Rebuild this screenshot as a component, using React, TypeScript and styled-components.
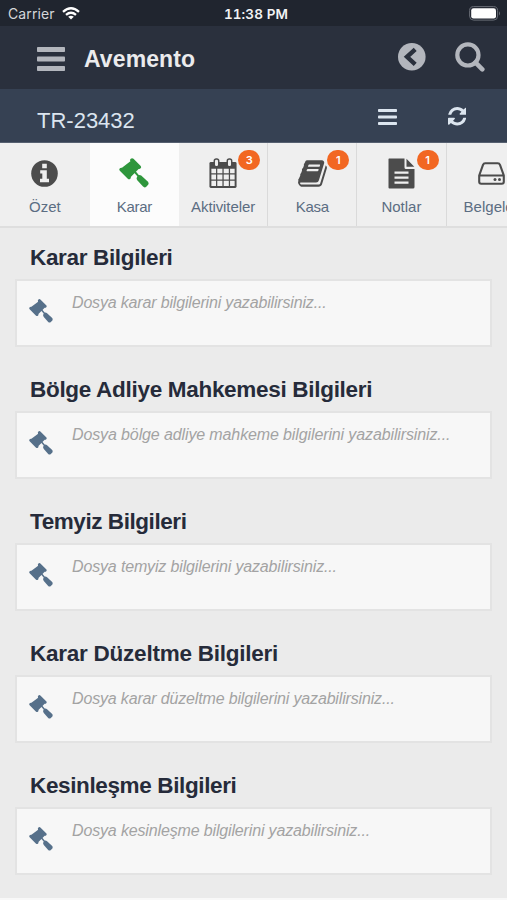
import React from "react";
import styled, { createGlobalStyle } from "styled-components";

const GlobalStyle = createGlobalStyle`
  * { box-sizing: border-box; }
  body { margin: 0; background: #ebebeb; font-family: "Liberation Sans", Arial, sans-serif; }
  svg { display: block; flex: none; }
`;

const Screen = styled.div`
  width: 507px;
  height: 900px;
  overflow: hidden;
  background: #ebebeb;
  border-bottom: 2px solid #f8f8f8;
`;

const StatusBar = styled.div`
  height: 26px;
  padding: 1px 6px 0 8px;
  display: grid;
  grid-template-columns: 1fr auto 1fr;
  align-items: center;
  background: #20252f;
  color: #f2f3f4;
  font-family: Inter, sans-serif;
  font-size: 14px;
`;

const Carrier = styled.div`
  display: flex;
  align-items: center;
  gap: 7px;
  color: #d5d7da;
  letter-spacing: 0.1px;
`;

const Clock = styled.div`
  font-weight: 600;
  font-size: 13.5px;
  font-variant-numeric: tabular-nums;
  letter-spacing: 0.1px;
  margin-left: 3px;
  white-space: nowrap;
`;

const BatterySlot = styled.div`
  display: flex;
  justify-content: flex-end;
`;

const Header = styled.header`
  height: 63px;
  padding: 3px 22px 0 37px;
  display: flex;
  align-items: center;
  background: #2a303d;
  color: #b3b6bd;
`;

const Brand = styled.h1`
  flex: 1;
  margin: 0 0 0 19px;
  color: #ebebed;
  font-size: 23px;
  line-height: 28px;
  letter-spacing: 0.1px;
`;

const HeaderActions = styled.div`
  display: flex;
  align-items: center;
  gap: 29px;
  margin-top: -4px;
`;

const CaseBar = styled.div`
  height: 54px;
  padding: 2px 41px 0 37px;
  display: flex;
  align-items: center;
  background: #364153;
  border-bottom: 1px solid #566070;
  color: #dce5ef;
`;

const CaseNumber = styled.div`
  flex: 1;
  padding-top: 8px;
  font-size: 22px;
  line-height: 26px;
`;

const CaseActions = styled.div`
  display: flex;
  align-items: center;
  gap: 51px;
`;

const Tabs = styled.nav`
  display: flex;
  height: 85px;
  overflow: hidden;
  background: #efefef;
  border-bottom: 2px solid #dedede;
`;

const Tab = styled.div<{ $active?: boolean; $divider?: boolean }>`
  position: relative;
  flex: none;
  width: 89.2px;
  padding-top: 13px;
  display: flex;
  flex-direction: column;
  align-items: center;
  background: ${(p) => (p.$active ? "#fcfcfc" : "#efefef")};
  color: ${(p) => (p.$active ? "#2e963c" : "#4c4c4c")};
  border-right: ${(p) => (p.$divider ? "1.5px solid #dadada" : "0")};

  &:first-child { width: 89.8px; }
`;

const TabIcon = styled.div`
  height: 34px;
  display: flex;
  align-items: center;
`;

const TabLabel = styled.div<{ $spacing: number }>`
  margin-top: 8px;
  color: #5b6d82;
  font-size: 15px;
  line-height: 18px;
  letter-spacing: ${(p) => p.$spacing}px;
  white-space: nowrap;
`;

const Badge = styled.span`
  position: absolute;
  top: 6.5px;
  right: 7px;
  width: 22px;
  height: 20px;
  border-radius: 10px;
  background: #f26722;
  color: #fff;
  font: 600 11px/20px Inter, sans-serif;
  text-align: center;
`;

const Content = styled.main`
  padding: 14px 15px 0;
`;

const Section = styled.section`
  height: 132px;
`;

const SectionTitle = styled.h2<{ $spacing: number }>`
  margin: 0 0 5px 15px;
  color: #262b3a;
  font-size: 22.5px;
  line-height: 32px;
  letter-spacing: ${(p) => p.$spacing}px;
  white-space: nowrap;
`;

const Note = styled.div`
  height: 68px;
  padding: 12px 0 0 12px;
  display: flex;
  align-items: flex-start;
  gap: 19px;
  background: #f7f7f7;
  border: 2px solid #e3e3e3;
  color: #56708a;
`;

const NoteIcon = styled.div`
  margin-top: 6px;
`;

const Placeholder = styled.div<{ $spacing: number }>`
  color: #a3a3a3;
  font-size: 16px;
  font-style: italic;
  line-height: 20px;
  letter-spacing: ${(p) => p.$spacing}px;
  white-space: nowrap;
`;

const Wifi = () => (
  <svg width="18" height="13" viewBox="0 0 18 13" fill="none" stroke="#fff" strokeWidth="2.3">
    <path d="M1 4.8Q9-2.2 17 4.8M4 7.9q5-4.2 10 0" />
    <path d="M6.2 9.7q2.8-2.1 5.6 0L9 12.6z" fill="#fff" stroke="none" />
  </svg>
);

const Battery = () => (
  <svg width="32" height="15" viewBox="0 0 32 15">
    <rect x=".6" y=".6" width="28" height="13.5" rx="4" fill="none" stroke="#686d76" />
    <rect x="2.2" y="2.2" width="24.8" height="10.3" rx="2.3" fill="#fff" />
    <path d="M30 5.2q2 2.2 0 4.4z" fill="#686d76" />
  </svg>
);

const Bars = ({ width, height, bar }: { width: number; height: number; bar: number }) => (
  <svg width={width} height={height} fill="currentColor">
    <rect width={width} height={bar} rx=".8" />
    <rect y={(height - bar) / 2} width={width} height={bar} rx=".8" />
    <rect y={height - bar} width={width} height={bar} rx=".8" />
  </svg>
);

const BackCircle = () => (
  <svg width="28" height="28" viewBox="0 0 28 28">
    <circle cx="13.8" cy="13.8" r="13.8" fill="currentColor" />
    <path d="M17.2 6.3 9 13.8l8.2 7.5" fill="none" stroke="#2a303d" strokeWidth="4.4" />
  </svg>
);

const Search = () => (
  <svg width="30" height="30" viewBox="0 0 30 30" fill="none" stroke="currentColor">
    <circle cx="12.9" cy="12.9" r="10.6" strokeWidth="4.2" />
    <path d="m20.4 20.4 6.9 6.9" strokeWidth="4.6" strokeLinecap="round" />
  </svg>
);

const Refresh = () => (
  <svg width="18.5" height="18.5" viewBox="0 128 1536 1536" fill="currentColor">
    <path d="M1511 1056q0 5-1 7-64 268-268 434.5t-478 166.5q-146 0-282.5-55t-243.5-157l-129 129q-19 19-45 19t-45-19-19-45v-448q0-26 19-45t45-19h448q26 0 45 19t19 45-19 45l-137 137q71 66 161 102t187 36q134 0 250-65t186-179q11-17 53-117 8-23 30-23h192q13 0 22.5 9.5t9.5 22.5zm25-800v448q0 26-19 45t-45 19h-448q-26 0-45-19t-19-45 19-45l138-138q-148-137-349-137-134 0-250 65t-186 179q-11 17-53 117-8 23-30 23h-199q-13 0-22.5-9.5t-9.5-22.5v-7q65-268 270-434.5t480-166.5q146 0 284 55.5t245 156.5l130-129q19-19 45-19t45 19 19 45z" />
  </svg>
);

const Gavel = ({ size }: { size: number }) => (
  <svg width={size} height={size} viewBox="0 0 30 30" fill="currentColor">
    <path d="M11.5 1Q13-.6 14.500.8l7 7q1.200 1.300.1 2.500-.8.900-2 .6l-7.800 8q.3 1.300-.7 2.100-1.200.8-2.300-.2l-8-8q-1.100-1.300.1-2.500.9-.8 2.100-.5L11.400 3.300q-.7-1.300.1-2.300z" />
    <path d="m15.500 13.500 4.200 4.800" fill="none" stroke="currentColor" strokeWidth="1.900" />
    <path d="M19 17.400q1.700-1.100 3.200.2l6.500 5.900q1.600 1.600.4 3.300l-1.800 1.900q-1.700 1.400-3.300-.1l-5.500-6.200q-1.400-1.600-.5-3.400z" />
  </svg>
);

const Info = () => (
  <svg width="27" height="27" viewBox="0 0 27 27">
    <circle cx="13.5" cy="13.5" r="13.3" fill="currentColor" />
    <path d="M11.2 3.8h4.6v4.4h-4.6zM9.2 10.2h6.6v8.600H18v3.400H9v-3.400h2.300v-5.200H9.200z" fill="#efefef" />
  </svg>
);

const Calendar = () => (
  <svg width="30" height="31" viewBox="0 0 30 32">
    <path d="M2.5 4.2h25q1.5 0 1.5 1.5v23.8q0 1.5-1.5 1.5h-25Q1 31 1 29.5V5.7q0-1.5 1.5-1.5z" fill="currentColor" />
    <path d="M3 11h4.8v4.7H3zm6.1 0h5.3v4.7H9.1zm6.6 0h5.3v4.7h-5.3zm6.6 0H27v4.7h-4.7zM3 17h4.8v5.3H3zm6.1 0h5.3v5.3H9.1zm6.6 0h5.3v5.3h-5.3zm6.6 0H27v5.3h-4.7zM3 23.6h4.8V29H3zm6.1 0h5.3V29H9.1zm6.6 0h5.3V29h-5.3zm6.6 0H27V29h-4.7z" fill="#efefef" />
    <rect x="6" y="1" width="4.6" height="8" rx="2.1" fill="#efefef" stroke="currentColor" strokeWidth="1.5" />
    <rect x="19.4" y="1" width="4.6" height="8" rx="2.1" fill="#efefef" stroke="currentColor" strokeWidth="1.5" />
  </svg>
);

const Book = () => (
  <svg width="29" height="27" viewBox="60 128 1672 1536" fill="currentColor">
    <path d="M1703 478q40 57 18 129l-275 906q-19 64-76.5 107.5t-122.5 43.5h-923q-77 0-148.5-53.5t-99.5-131.5q-24-67-2-127 0-4 3-27t4-37q1-8-3-21.5t-3-19.5q2-11 8-21t16.5-23.5 16.5-23.5q23-38 45-91.5t30-91.5q3-10 .5-30t-.5-28q3-11 17-28t17-23q21-36 42-92t25-90q1-9-2.5-32t.5-28q4-13 22-30.5t22-22.5q19-26 42.5-84.5t27.5-96.5q1-8-3-25.5t-2-26.5q2-8 9-18t18-23 17-21q8-12 16.5-30.5t15-35 16-36 19.5-32 26.5-23.5 36-11.5 47.5 5.5l-1 3q38-9 51-9h761q74 0 114 56t18 130l-274 906q-36 119-71.5 153.5t-128.5 34.5h-869q-27 0-38 15-11 16-1 43 24 70 144 70h923q29 0 56-15.5t35-41.5l300-987q7-22 5-57 38 15 59 43zm-1064 2q-4 13 2 22.5t20 9.5h608q13 0 25.5-9.5t16.5-22.5l21-64q4-13-2-22.5t-20-9.5h-608q-13 0-25.5 9.5t-16.5 22.5zm-83 256q-4 13 2 22.5t20 9.5h608q13 0 25.5-9.5t16.5-22.5l21-64q4-13-2-22.5t-20-9.5h-608q-13 0-25.5 9.5t-16.5 22.5z" />
  </svg>
);

const FileText = () => (
  <svg width="27" height="31" viewBox="0 0 27 31">
    <path d="M1 .5h15.5v9q0 1.500 1.500 1.500h8.500v18q0 1.500-1.500 1.500H1.500Q.5 30.500.5 29.500V1zM18.500.7l7.800 8.100h-7.800z" fill="currentColor" />
    <path d="M6.500 13.500h14v2.200h-14zm0 5h14v2.200h-14zm0 5h14v2.200h-14z" fill="#efefef" />
  </svg>
);

const Drive = () => (
  <svg width="27" height="23" viewBox="0 0 27 23" fill="none" stroke="currentColor" strokeWidth="2.1">
    <path d="M1.2 13.5 5 2.8Q5.6 1.2 7.2 1.2h12.6q1.6 0 2.2 1.6l3.8 10.7v6.3q0 2-2 2H3.200q-2 0-2-2zM1.200 13.500h24.600" />
    <circle cx="17" cy="17.500" r="1.500" fill="currentColor" stroke="none" />
    <circle cx="21.500" cy="17.500" r="1.500" fill="currentColor" stroke="none" />
  </svg>
);

const tabs = [
  { label: "Özet", icon: <Info />, spacing: 0 },
  { label: "Karar", icon: <Gavel size={30} />, spacing: -0.3, active: true },
  { label: "Aktiviteler", icon: <Calendar />, badge: "3", spacing: -0.1, divider: true },
  { label: "Kasa", icon: <Book />, badge: "1", spacing: -0.3, divider: true },
  { label: "Notlar", icon: <FileText />, badge: "1", spacing: 0, divider: true },
  { label: "Belgeler", icon: <Drive />, badge: "1", spacing: 0 },
];

const sections = [
  { title: "Karar Bilgileri", titleSpacing: -0.34, hint: "Dosya karar bilgilerini yazabilirsiniz...", hintSpacing: -0.17 },
  { title: "Bölge Adliye Mahkemesi Bilgileri", titleSpacing: -0.3, hint: "Dosya bölge adliye mahkeme bilgilerini yazabilirsiniz...", hintSpacing: -0.12 },
  { title: "Temyiz Bilgileri", titleSpacing: -0.43, hint: "Dosya temyiz bilgilerini yazabilirsiniz...", hintSpacing: -0.15 },
  { title: "Karar Düzeltme Bilgileri", titleSpacing: -0.24, hint: "Dosya karar düzeltme bilgilerini yazabilirsiniz...", hintSpacing: -0.16 },
  { title: "Kesinleşme Bilgileri", titleSpacing: -0.37, hint: "Dosya kesinleşme bilgilerini yazabilirsiniz...", hintSpacing: -0.15 },
];

export default function App() {
  return (
    <Screen>
      <GlobalStyle />
      <StatusBar>
        <Carrier>Carrier <Wifi /></Carrier>
        <Clock>11:38 PM</Clock>
        <BatterySlot><Battery /></BatterySlot>
      </StatusBar>
      <Header>
        <Bars width={28} height={24} bar={5} />
        <Brand>Avemento</Brand>
        <HeaderActions><BackCircle /><Search /></HeaderActions>
      </Header>
      <CaseBar>
        <CaseNumber>TR-23432</CaseNumber>
        <CaseActions><Bars width={19} height={16} bar={3} /><Refresh /></CaseActions>
      </CaseBar>
      <Tabs>
        {tabs.map((t) => (
          <Tab key={t.label} $active={t.active} $divider={t.divider}>
            <TabIcon>{t.icon}</TabIcon>
            <TabLabel $spacing={t.spacing}>{t.label}</TabLabel>
            {t.badge && <Badge>{t.badge}</Badge>}
          </Tab>
        ))}
      </Tabs>
      <Content>
        {sections.map((s) => (
          <Section key={s.title}>
            <SectionTitle $spacing={s.titleSpacing}>{s.title}</SectionTitle>
            <Note>
              <NoteIcon><Gavel size={24} /></NoteIcon>
              <Placeholder $spacing={s.hintSpacing}>{s.hint}</Placeholder>
            </Note>
          </Section>
        ))}
      </Content>
    </Screen>
  );
}
